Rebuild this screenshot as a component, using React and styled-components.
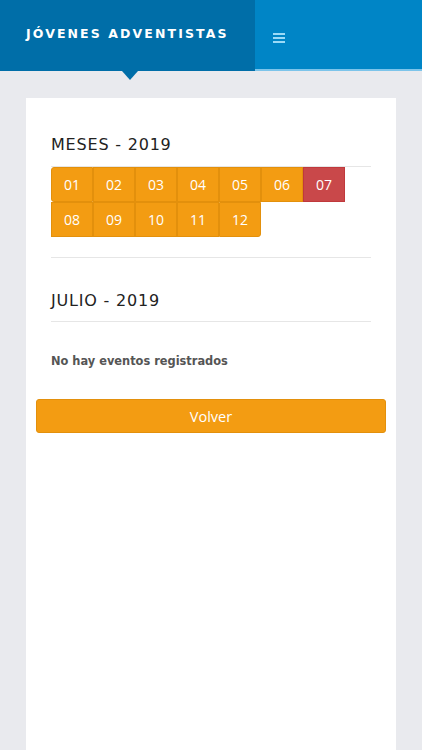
import React from "react";
import styled, { createGlobalStyle } from "styled-components";

const GlobalStyle = createGlobalStyle`
  html, body {
    margin: 0;
    padding: 0;
    background: #e9eaee;
    font-family: "DejaVu Sans", "Noto Sans", sans-serif;
  }
  * { box-sizing: border-box; }
`;

const Header = styled.header`
  display: flex;
  height: 71px;
`;

const Brand = styled.div`
  position: relative;
  width: 255px;
  height: 71px;
  background: #006ea8;
  display: flex;
  align-items: center;
  padding: 0 0 4px 26px;
  color: #fff;
  font-weight: bold;
  font-size: 12.5px;
  letter-spacing: 2.1px;

  &::after {
    content: "";
    position: absolute;
    left: 122px;
    top: 71px;
    border-left: 8px solid transparent;
    border-right: 8px solid transparent;
    border-top: 9px solid #006ea8;
  }
`;

const NavBar = styled.div`
  flex: 1;
  height: 71px;
  background: #0085c6;
  border-bottom: 2px solid #7cc4ea;
  display: flex;
  align-items: center;
  padding: 0 0 0 18px;
`;

const Burger = styled.div`
  display: flex;
  flex-direction: column;
  gap: 2px;
  margin-top: 6px;

  span {
    display: block;
    width: 12px;
    height: 2px;
    background: #9bdaf7;
  }
`;

const Main = styled.main`
  padding: 27px 26px 0;
`;

const Card = styled.section`
  background: #fff;
  min-height: 652px;
  padding: 37px 25px 30px;
`;

const Title = styled.h2`
  margin: 0;
  font-weight: normal;
  font-size: 16px;
  letter-spacing: 0.8px;
  color: #222;
  line-height: 20px;
  padding-bottom: ${(p) => p.gap || 11}px;
  border-bottom: 1px solid #e6e6e6;
`;

const Months = styled.div`
  display: flex;
  flex-wrap: wrap;
  width: 320px;
`;

const Month = styled.button`
  width: 42px;
  height: 35px;
  margin: 0;
  border: 1px solid ${(p) => (p.active ? "#c0393c" : "#e3900c")};
  background: ${(p) => (p.active ? "#c9484a" : "#f39c12")};
  color: #fff;
  font-family: "Open Sans", sans-serif;
  font-size: 14px;
  padding: 0;

  &:first-child {
    border-top-left-radius: 3px;
    border-bottom-left-radius: 3px;
  }
  &:last-child {
    border-bottom-right-radius: 3px;
  }
`;

const Divider = styled.hr`
  border: 0;
  border-top: 1px solid #e6e6e6;
  margin: 20px 0 33px;
`;

const Empty = styled.p`
  margin: 32px 0 0;
  font-weight: bold;
  font-size: 11.4px;
  color: #555;
`;

const BackButton = styled.button`
  display: block;
  width: calc(100% + 30px);
  margin: 31px -15px 0;
  height: 34px;
  background: #f39c12;
  border: 1px solid #e3900c;
  border-radius: 3px;
  color: #fff;
  font-family: "Open Sans", sans-serif;
  font-size: 14.5px;
`;

const months = ["01", "02", "03", "04", "05", "06", "07", "08", "09", "10", "11", "12"];

export default function App() {
  return (
    <>
      <GlobalStyle />
      <Header>
        <Brand>JÓVENES ADVENTISTAS</Brand>
        <NavBar>
          <Burger>
            <span />
            <span />
            <span />
          </Burger>
        </NavBar>
      </Header>
      <Main>
        <Card>
          <Title>MESES - 2019</Title>
          <Months>
            {months.map((m) => (
              <Month key={m} active={m === "07"}>
                {m}
              </Month>
            ))}
          </Months>
          <Divider />
          <Title gap={10}>JULIO - 2019</Title>
          <Empty>No hay eventos registrados</Empty>
          <BackButton>Volver</BackButton>
        </Card>
      </Main>
    </>
  );
}
